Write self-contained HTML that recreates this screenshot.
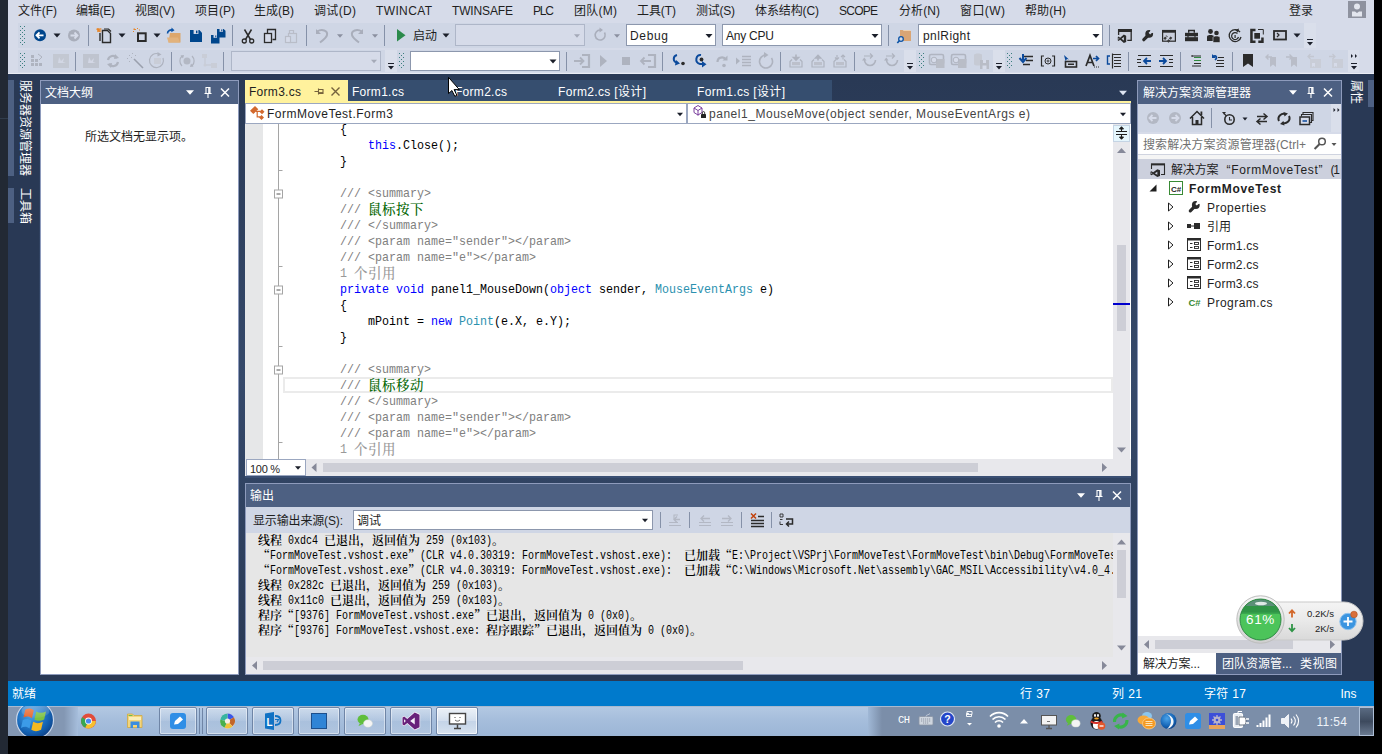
<!DOCTYPE html>
<html lang="zh-CN"><head><meta charset="utf-8"><title>FormMoveTest - Microsoft Visual Studio</title>
<style>
html,body{margin:0;padding:0;background:#000;}
#r{position:relative;width:1382px;height:754px;overflow:hidden;font-family:"Liberation Sans","Noto Sans CJK SC",sans-serif;font-size:12px;}
#r div,#r span.t{position:absolute;}
.t{white-space:pre;transform-origin:0 50%;}
.mo{font-family:"Liberation Mono","Noto Serif CJK SC",monospace;}
.cj{font-family:"Noto Serif CJK SC","Liberation Mono",serif;}
.vt{writing-mode:vertical-rl;text-orientation:sideways;font-size:12px;line-height:14px;width:14px;color:#fff;letter-spacing:0px;transform:translateX(-100%);white-space:nowrap;}
svg{position:absolute;left:0;top:0;}
</style></head><body><div id="r">
<div style="left:0px;top:0px;width:1382px;height:754px;background:#293955;"></div>
<div style="left:39px;top:80px;width:1303px;height:595px;background:linear-gradient(180deg,#293955 0%,#35496a 50%,#293955 100%);"></div>
<div style="left:0px;top:0px;width:8px;height:754px;background:#222934;"></div>
<div style="left:0px;top:118px;width:8px;height:1px;background:#313d4c;"></div>
<div style="left:1374px;top:0px;width:8px;height:754px;background:#000;"></div>
<div style="left:8px;top:0px;width:1366px;height:74px;background:#d6dbe9;"></div>
<div style="left:8px;top:73px;width:1366px;height:1px;background:#e9ecf4;"></div>
<span class="t" style="left:18px;top:2.5px;height:16px;line-height:16px;font-size:12px;color:#1e1e1e;letter-spacing:-0.082px;">文件(F)</span>
<span class="t" style="left:76px;top:2.5px;height:16px;line-height:16px;font-size:12px;color:#1e1e1e;letter-spacing:-0.250px;">编辑(E)</span>
<span class="t" style="left:135px;top:2.5px;height:16px;line-height:16px;font-size:12px;color:#1e1e1e;letter-spacing:0.000px;">视图(V)</span>
<span class="t" style="left:195px;top:2.5px;height:16px;line-height:16px;font-size:12px;color:#1e1e1e;letter-spacing:0.000px;">项目(P)</span>
<span class="t" style="left:254px;top:2.5px;height:16px;line-height:16px;font-size:12px;color:#1e1e1e;letter-spacing:0.000px;">生成(B)</span>
<span class="t" style="left:314px;top:2.5px;height:16px;line-height:16px;font-size:12px;color:#1e1e1e;letter-spacing:0.332px;">调试(D)</span>
<span class="t" style="left:376px;top:2.5px;height:16px;line-height:16px;font-size:12px;color:#1e1e1e;letter-spacing:0.372px;">TWINCAT</span>
<span class="t" style="left:452px;top:2.5px;height:16px;line-height:16px;font-size:12px;color:#1e1e1e;letter-spacing:-0.143px;">TWINSAFE</span>
<span class="t" style="left:533px;top:2.5px;height:16px;line-height:16px;font-size:12px;color:#1e1e1e;letter-spacing:-1.172px;">PLC</span>
<span class="t" style="left:574px;top:2.5px;height:16px;line-height:16px;font-size:12px;color:#1e1e1e;letter-spacing:0.250px;">团队(M)</span>
<span class="t" style="left:637px;top:2.5px;height:16px;line-height:16px;font-size:12px;color:#1e1e1e;letter-spacing:-0.082px;">工具(T)</span>
<span class="t" style="left:696px;top:2.5px;height:16px;line-height:16px;font-size:12px;color:#1e1e1e;letter-spacing:-0.250px;">测试(S)</span>
<span class="t" style="left:755px;top:2.5px;height:16px;line-height:16px;font-size:12px;color:#1e1e1e;letter-spacing:-0.112px;">体系结构(C)</span>
<span class="t" style="left:839px;top:2.5px;height:16px;line-height:16px;font-size:12px;color:#1e1e1e;letter-spacing:-0.754px;">SCOPE</span>
<span class="t" style="left:899px;top:2.5px;height:16px;line-height:16px;font-size:12px;color:#1e1e1e;letter-spacing:0.082px;">分析(N)</span>
<span class="t" style="left:960px;top:2.5px;height:16px;line-height:16px;font-size:12px;color:#1e1e1e;letter-spacing:0.418px;">窗口(W)</span>
<span class="t" style="left:1025px;top:2.5px;height:16px;line-height:16px;font-size:12px;color:#1e1e1e;letter-spacing:0.082px;">帮助(H)</span>
<span class="t" style="left:1289px;top:2.5px;height:16px;line-height:16px;font-size:12px;color:#1e1e1e;letter-spacing:-0.016px;">登录</span>
<div style="left:1348px;top:1px;width:18px;height:17px;background:#8e929f;"></div>
<div style="left:18px;top:23px;width:1286px;height:25px;background:#cfd6e5;"></div>
<div style="left:1304px;top:23px;width:12px;height:25px;background:#dadfeb;"></div>
<div style="left:18px;top:50px;width:367px;height:22px;background:#cfd6e5;"></div>
<div style="left:397px;top:50px;width:507px;height:22px;background:#cfd6e5;"></div>
<div style="left:916px;top:50px;width:77px;height:22px;background:#cfd6e5;"></div>
<div style="left:1005px;top:50px;width:343px;height:22px;background:#cfd6e5;"></div>
<div style="left:385px;top:50px;width:12px;height:22px;background:#dadfeb;"></div>
<div style="left:904px;top:50px;width:12px;height:22px;background:#dadfeb;"></div>
<div style="left:993px;top:50px;width:12px;height:22px;background:#dadfeb;"></div>
<div style="left:1348px;top:50px;width:11px;height:22px;background:#dadfeb;"></div>
<div style="left:455px;top:24px;width:130px;height:22px;background:#d6dbe9;box-sizing:border-box;border:1px solid #aeb6c8;"></div>
<div style="left:626px;top:24px;width:90px;height:22px;background:#fff;box-sizing:border-box;border:1px solid #8c97ad;"></div>
<div style="left:722px;top:24px;width:160px;height:22px;background:#fff;box-sizing:border-box;border:1px solid #8c97ad;"></div>
<div style="left:918px;top:24px;width:185px;height:22px;background:#fff;box-sizing:border-box;border:1px solid #8c97ad;"></div>
<div style="left:231px;top:51px;width:150px;height:20px;background:#d6dbe9;box-sizing:border-box;border:1px solid #aeb6c8;"></div>
<div style="left:410px;top:51px;width:150px;height:20px;background:#fff;box-sizing:border-box;border:1px solid #8c97ad;"></div>
<span class="t" style="left:413px;top:28.0px;height:16px;line-height:16px;font-size:12px;color:#1e1e1e;letter-spacing:-0.016px;">启动</span>
<span class="t" style="left:630px;top:28.0px;height:16px;line-height:16px;font-size:12px;color:#1e1e1e;letter-spacing:0.656px;">Debug</span>
<span class="t" style="left:726px;top:28.0px;height:16px;line-height:16px;font-size:12px;color:#1e1e1e;letter-spacing:-0.227px;">Any CPU</span>
<span class="t" style="left:923px;top:28.0px;height:16px;line-height:16px;font-size:12px;color:#1e1e1e;letter-spacing:0.424px;">pnlRight</span>
<div style="left:8px;top:80px;width:6px;height:96px;background:#4d6082;"></div>
<div style="left:8px;top:188px;width:6px;height:35px;background:#4d6082;"></div>
<div class="vt" style="left:32px;top:80px;">服务器资源管理器</div>
<div class="vt" style="left:32px;top:188px;">工具箱</div>
<div class="vt" style="left:1363px;top:80px;">属性</div>
<div style="left:1368px;top:80px;width:6px;height:27px;background:#4d6082;"></div>
<div style="left:40px;top:80px;width:199px;height:595px;background:#fff;box-sizing:border-box;border:1px solid #8e9bbc;"></div>
<div style="left:41px;top:81px;width:197px;height:23px;background:#4d6082;"></div>
<span class="t" style="left:45px;top:85.0px;height:16px;line-height:16px;font-size:12px;color:#fff;letter-spacing:-0.005px;">文档大纲</span>
<span class="t" style="left:85px;top:129.0px;height:16px;line-height:16px;font-size:12px;color:#1e1e1e;">所选文档无显示项。</span>
<div style="left:348px;top:80px;width:484px;height:21px;background:#364e6f;"></div>
<div style="left:245px;top:80px;width:103px;height:23px;background:#fff29d;"></div>
<div style="left:245px;top:101px;width:886px;height:2px;background:#fff29d;"></div>
<span class="t" style="left:249px;top:84.0px;height:16px;line-height:16px;font-size:12px;color:#1e1e1e;letter-spacing:0.283px;">Form3.cs</span>
<span class="t" style="left:352px;top:84.0px;height:16px;line-height:16px;font-size:12px;color:#fff;letter-spacing:0.283px;">Form1.cs</span>
<span class="t" style="left:455px;top:84.0px;height:16px;line-height:16px;font-size:12px;color:#fff;letter-spacing:0.283px;">Form2.cs</span>
<span class="t" style="left:558px;top:84.0px;height:16px;line-height:16px;font-size:12px;color:#fff;letter-spacing:0.332px;">Form2.cs [设计]</span>
<span class="t" style="left:697px;top:84.0px;height:16px;line-height:16px;font-size:12px;color:#fff;letter-spacing:0.332px;">Form1.cs [设计]</span>
<div style="left:245px;top:103px;width:886px;height:374px;background:#fff;"></div>
<div style="left:245px;top:103px;width:886px;height:21px;background:#fff;box-sizing:border-box;border:1px solid #9ba7c0;"></div>
<div style="left:686px;top:103px;width:2px;height:21px;background:#9ba7c0;"></div>
<span class="t" style="left:267px;top:106.0px;height:16px;line-height:16px;font-size:12px;color:#1e1e1e;letter-spacing:0.508px;">FormMoveTest.Form3</span>
<span class="t" style="left:709px;top:106.0px;height:16px;line-height:16px;font-size:12px;color:#444;letter-spacing:0.531px;">panel1_MouseMove(object sender, MouseEventArgs e)</span>
<div style="left:245px;top:124px;width:18px;height:335px;background:#e6e7e8;"></div>
<div style="left:1113px;top:124px;width:17px;height:335px;background:#e8e8ec;"></div>
<div style="left:1113px;top:125px;width:17px;height:17px;background:#e5f6fd;box-sizing:border-box;border:1px solid #c5d4e4;"></div>
<div style="left:1117px;top:245px;width:9px;height:86px;background:#cdced6;"></div>
<div style="left:1113px;top:303px;width:17px;height:2px;background:#0000cd;"></div>
<div style="left:278px;top:124px;width:1px;height:335px;background:#a5a5a5;"></div>
<div style="left:283px;top:377px;width:830px;height:16px;background:#fff;box-sizing:border-box;border:2px solid #ebebeb;"></div>
<div style="left:245px;top:459px;width:886px;height:18px;background:#e8e8ec;"></div>
<div style="left:246px;top:459px;width:60px;height:17px;background:#fff;box-sizing:border-box;border:1px solid #9ba7c0;"></div>
<span class="t" style="left:250px;top:460.5px;height:16px;line-height:16px;font-size:11px;color:#1e1e1e;letter-spacing:-0.301px;">100 %</span>
<div style="left:323px;top:463px;width:655px;height:9px;background:#cdced6;"></div>
<div style="left:245px;top:476px;width:886px;height:2px;background:#3a4f73;"></div>
<div style="left:245px;top:483px;width:886px;height:192px;background:#e6e6e6;box-sizing:border-box;border:1px solid #8e9bbc;"></div>
<div style="left:246px;top:484px;width:884px;height:23px;background:#4d6082;"></div>
<span class="t" style="left:250px;top:488.0px;height:16px;line-height:16px;font-size:12px;color:#fff;letter-spacing:-0.016px;">输出</span>
<div style="left:246px;top:507px;width:884px;height:26px;background:#cfd6e5;"></div>
<span class="t" style="left:253px;top:512.5px;height:16px;line-height:16px;font-size:12px;color:#1e1e1e;letter-spacing:-0.149px;">显示输出来源(S):</span>
<div style="left:353px;top:510px;width:300px;height:20px;background:#fff;box-sizing:border-box;border:1px solid #8c97ad;"></div>
<span class="t" style="left:357px;top:512.5px;height:16px;line-height:16px;font-size:12px;color:#1e1e1e;letter-spacing:-0.016px;">调试</span>
<div style="left:1113px;top:533px;width:17px;height:124px;background:#e8e8ec;"></div>
<div style="left:1117px;top:550px;width:9px;height:48px;background:#cdced6;"></div>
<div style="left:246px;top:657px;width:884px;height:17px;background:#e8e8ec;"></div>
<div style="left:263px;top:661px;width:480px;height:9px;background:#cdced6;"></div>
<div style="left:1137px;top:80px;width:205px;height:595px;background:#fff;box-sizing:border-box;border:1px solid #8e9bbc;"></div>
<div style="left:1138px;top:81px;width:203px;height:23px;background:#4d6082;"></div>
<span class="t" style="left:1143px;top:85.0px;height:16px;line-height:16px;font-size:12px;color:#fff;letter-spacing:-0.002px;">解决方案资源管理器</span>
<div style="left:1138px;top:104px;width:203px;height:28px;background:#cfd6e5;"></div>
<div style="left:1331px;top:104px;width:10px;height:28px;background:#dadfeb;"></div>
<div style="left:1138px;top:132px;width:203px;height:2px;background:#d6dbe9;"></div>
<div style="left:1138px;top:134px;width:203px;height:21px;background:#fff;box-sizing:border-box;border-bottom:1px solid #d0d4e0;"></div>
<span class="t" style="left:1143px;top:137.0px;height:16px;line-height:16px;font-size:12px;color:#717171;letter-spacing:0.083px;">搜索解决方案资源管理器(Ctrl+</span>
<div style="left:1138px;top:155px;width:203px;height:4px;background:#f5f5f5;"></div>
<div style="left:1138px;top:159px;width:203px;height:20px;background:#ccd0dd;"></div>
<span class="t" style="left:1171px;top:161.5px;height:16px;line-height:16px;font-size:12px;color:#1e1e1e;letter-spacing:-0.172px;">解决方案</span>
<span class="t" style="left:1226.5px;top:161.5px;height:16px;line-height:16px;font-size:12px;color:#1e1e1e;letter-spacing:0.666px;">“FormMoveTest”</span>
<span class="t" style="left:1330.5px;top:161.5px;height:16px;line-height:16px;font-size:12px;color:#1e1e1e;letter-spacing:-1.172px;">(1</span>
<span class="t" style="left:1189px;top:180.5px;height:16px;line-height:16px;font-size:12px;color:#1e1e1e;font-weight:700;letter-spacing:0.685px;">FormMoveTest</span>
<span class="t" style="left:1207px;top:199.5px;height:16px;line-height:16px;font-size:12px;color:#1e1e1e;letter-spacing:0.477px;">Properties</span>
<span class="t" style="left:1207px;top:218.5px;height:16px;line-height:16px;font-size:12px;color:#1e1e1e;letter-spacing:-0.016px;">引用</span>
<span class="t" style="left:1207px;top:237.5px;height:16px;line-height:16px;font-size:12px;color:#1e1e1e;letter-spacing:0.212px;">Form1.cs</span>
<span class="t" style="left:1207px;top:256.5px;height:16px;line-height:16px;font-size:12px;color:#1e1e1e;letter-spacing:0.212px;">Form2.cs</span>
<span class="t" style="left:1207px;top:275.5px;height:16px;line-height:16px;font-size:12px;color:#1e1e1e;letter-spacing:0.212px;">Form3.cs</span>
<span class="t" style="left:1207px;top:294.5px;height:16px;line-height:16px;font-size:12px;color:#1e1e1e;letter-spacing:0.460px;">Program.cs</span>
<div style="left:1138px;top:636px;width:203px;height:17px;background:#e8e8ec;"></div>
<div style="left:1155px;top:640px;width:138px;height:9px;background:#cdced6;"></div>
<div style="left:1138px;top:653px;width:203px;height:21px;background:#4d6082;"></div>
<div style="left:1138px;top:653px;width:78px;height:21px;background:#fff;"></div>
<span class="t" style="left:1143px;top:656.0px;height:16px;line-height:16px;font-size:12px;color:#1e1e1e;letter-spacing:-0.169px;">解决方案...</span>
<span class="t" style="left:1222px;top:656.0px;height:16px;line-height:16px;font-size:12px;color:#fff;letter-spacing:-0.002px;">团队资源管...</span>
<span class="t" style="left:1300px;top:656.0px;height:16px;line-height:16px;font-size:12px;color:#fff;letter-spacing:0.492px;">类视图</span>
<div style="left:8px;top:681px;width:1366px;height:25px;background:#007acc;"></div>
<span class="t" style="left:12px;top:686.0px;height:16px;line-height:16px;font-size:12px;color:#fff;letter-spacing:-0.016px;">就绪</span>
<span class="t" style="left:1020px;top:686.0px;height:16px;line-height:16px;font-size:12px;color:#fff;letter-spacing:0.438px;">行 37</span>
<span class="t" style="left:1112px;top:686.0px;height:16px;line-height:16px;font-size:12px;color:#fff;letter-spacing:0.438px;">列 21</span>
<span class="t" style="left:1204px;top:686.0px;height:16px;line-height:16px;font-size:12px;color:#fff;letter-spacing:0.328px;">字符 17</span>
<span class="t" style="left:1340.5px;top:686.0px;height:16px;line-height:16px;font-size:12px;color:#fff;letter-spacing:-0.008px;">Ins</span>
<div style="left:8px;top:706px;width:1366px;height:30px;background:#a6bedc;"></div>
<div style="left:8px;top:706px;width:70px;height:30px;background:linear-gradient(90deg,#8397b3 0,#8397b3 80%,#a6bedc 100%);"></div>
<div style="left:78px;top:706px;width:800px;height:30px;background:linear-gradient(180deg,#b4c9e3 0,#a6bedc 45%,#9cb6d6 100%);"></div>
<div style="left:868px;top:706px;width:506px;height:30px;background:linear-gradient(90deg,#a0b8d6 0,#7b8ea9 14px,#7b8ea9 100%);"></div>
<div style="left:8px;top:706px;width:1366px;height:1px;background:#a9b9cf;"></div>
<div style="left:8px;top:736px;width:1374px;height:18px;background:#000;"></div>
<div style="left:159px;top:707px;width:38px;height:28px;background:linear-gradient(180deg,rgba(255,255,255,.35),rgba(255,255,255,.12) 50%,rgba(255,255,255,.05) 51%,rgba(255,255,255,.2));box-sizing:border-box;border:1px solid #6f85a6;border-radius:2px;box-shadow:inset 0 0 0 1px rgba(255,255,255,.45);"></div>
<div style="left:206px;top:707px;width:42px;height:28px;background:linear-gradient(180deg,rgba(255,255,255,.35),rgba(255,255,255,.12) 50%,rgba(255,255,255,.05) 51%,rgba(255,255,255,.2));box-sizing:border-box;border:1px solid #6f85a6;border-radius:2px;box-shadow:inset 0 0 0 1px rgba(255,255,255,.45);"></div>
<div style="left:252px;top:707px;width:42px;height:28px;background:linear-gradient(180deg,rgba(255,255,255,.35),rgba(255,255,255,.12) 50%,rgba(255,255,255,.05) 51%,rgba(255,255,255,.2));box-sizing:border-box;border:1px solid #6f85a6;border-radius:2px;box-shadow:inset 0 0 0 1px rgba(255,255,255,.45);"></div>
<div style="left:298px;top:707px;width:42px;height:28px;background:linear-gradient(180deg,rgba(255,255,255,.35),rgba(255,255,255,.12) 50%,rgba(255,255,255,.05) 51%,rgba(255,255,255,.2));box-sizing:border-box;border:1px solid #6f85a6;border-radius:2px;box-shadow:inset 0 0 0 1px rgba(255,255,255,.45);"></div>
<div style="left:344px;top:707px;width:42px;height:28px;background:linear-gradient(180deg,rgba(255,255,255,.35),rgba(255,255,255,.12) 50%,rgba(255,255,255,.05) 51%,rgba(255,255,255,.2));box-sizing:border-box;border:1px solid #6f85a6;border-radius:2px;box-shadow:inset 0 0 0 1px rgba(255,255,255,.45);"></div>
<div style="left:390px;top:707px;width:42px;height:28px;background:linear-gradient(180deg,rgba(255,255,255,.35),rgba(255,255,255,.12) 50%,rgba(255,255,255,.05) 51%,rgba(255,255,255,.2));box-sizing:border-box;border:1px solid #6f85a6;border-radius:2px;box-shadow:inset 0 0 0 1px rgba(255,255,255,.45);"></div>
<div style="left:436px;top:707px;width:42px;height:28px;background:linear-gradient(180deg,rgba(255,255,255,.75),rgba(255,255,255,.5) 50%,rgba(255,255,255,.35) 51%,rgba(255,255,255,.6));box-sizing:border-box;border:1px solid #6f85a6;border-radius:2px;box-shadow:inset 0 0 0 1px rgba(255,255,255,.7);"></div>
<div style="left:199px;top:708px;width:1px;height:26px;background:#6f85a6;"></div>
<div style="left:202px;top:708px;width:1px;height:26px;background:#6f85a6;"></div>
<span class="t" style="left:898px;top:711.5px;height:16px;line-height:16px;font-size:10.5px;color:#fff;font-family:'Liberation Mono','Noto Serif CJK SC',monospace;letter-spacing:-0.609px;">CH</span>
<span class="t" style="left:1316.5px;top:714.0px;height:16px;line-height:16px;font-size:12px;color:#eef3f9;letter-spacing:0.340px;">11:54</span>
<div style="left:1359px;top:707px;width:15px;height:29px;background:linear-gradient(180deg,#5a6b82,#3d4a5e 50%,#6a7a90);box-sizing:border-box;border:1px solid #aebfd6;"></div>
<div style="left:245px;top:124px;width:868px;height:335px;overflow:hidden;"><span class="t mo" style="left:39.0px;top:-2.0px;height:16px;line-height:16px;font-size:13px;transform:scaleX(0.8973);color:#000">        {</span><span class="t mo" style="left:123.0px;top:14.0px;height:16px;line-height:16px;font-size:13px;transform:scaleX(0.8973);color:#0000ff">this</span><span class="t mo" style="left:151.0px;top:14.0px;height:16px;line-height:16px;font-size:13px;transform:scaleX(0.8973);color:#000">.Close();</span><span class="t mo" style="left:39.0px;top:30.0px;height:16px;line-height:16px;font-size:13px;transform:scaleX(0.8973);color:#000">        }</span><span class="t mo" style="left:39.0px;top:62.0px;height:16px;line-height:16px;font-size:13px;transform:scaleX(0.8973);color:#808080">        /// &lt;summary&gt;</span><span class="t mo" style="left:39.0px;top:78.0px;height:16px;line-height:16px;font-size:13px;transform:scaleX(0.8973);color:#808080">        /// </span><span class="t cj" style="left:123.0px;top:75.5px;height:16px;line-height:16px;font-size:13.5px;letter-spacing:0.50px;color:#006400;font-weight:500">鼠标按下</span><span class="t mo" style="left:39.0px;top:94.0px;height:16px;line-height:16px;font-size:13px;transform:scaleX(0.8973);color:#808080">        /// &lt;/summary&gt;</span><span class="t mo" style="left:39.0px;top:110.0px;height:16px;line-height:16px;font-size:13px;transform:scaleX(0.8973);color:#808080">        /// &lt;param name="sender"&gt;&lt;/param&gt;</span><span class="t mo" style="left:39.0px;top:126.0px;height:16px;line-height:16px;font-size:13px;transform:scaleX(0.8973);color:#808080">        /// &lt;param name="e"&gt;&lt;/param&gt;</span><span class="t mo" style="left:39.0px;top:142.0px;height:16px;line-height:16px;font-size:13px;transform:scaleX(0.8973);color:#999">        1 </span><span class="t cj" style="left:109.0px;top:139.5px;height:16px;line-height:16px;font-size:13.5px;letter-spacing:0.50px;color:#999;font-weight:500">个引用</span><span class="t mo" style="left:95.0px;top:158.0px;height:16px;line-height:16px;font-size:13px;transform:scaleX(0.8973);color:#0000ff">private void</span><span class="t mo" style="left:179.0px;top:158.0px;height:16px;line-height:16px;font-size:13px;transform:scaleX(0.8973);color:#000"> panel1_MouseDown(</span><span class="t mo" style="left:305.0px;top:158.0px;height:16px;line-height:16px;font-size:13px;transform:scaleX(0.8973);color:#0000ff">object</span><span class="t mo" style="left:347.0px;top:158.0px;height:16px;line-height:16px;font-size:13px;transform:scaleX(0.8973);color:#000"> sender, </span><span class="t mo" style="left:410.0px;top:158.0px;height:16px;line-height:16px;font-size:13px;transform:scaleX(0.8973);color:#2b91af">MouseEventArgs</span><span class="t mo" style="left:508.0px;top:158.0px;height:16px;line-height:16px;font-size:13px;transform:scaleX(0.8973);color:#000"> e)</span><span class="t mo" style="left:39.0px;top:174.0px;height:16px;line-height:16px;font-size:13px;transform:scaleX(0.8973);color:#000">        {</span><span class="t mo" style="left:39.0px;top:190.0px;height:16px;line-height:16px;font-size:13px;transform:scaleX(0.8973);color:#000">            mPoint = </span><span class="t mo" style="left:186.0px;top:190.0px;height:16px;line-height:16px;font-size:13px;transform:scaleX(0.8973);color:#0000ff">new</span><span class="t mo" style="left:214.0px;top:190.0px;height:16px;line-height:16px;font-size:13px;transform:scaleX(0.8973);color:#2b91af">Point</span><span class="t mo" style="left:249.0px;top:190.0px;height:16px;line-height:16px;font-size:13px;transform:scaleX(0.8973);color:#000">(e.X, e.Y);</span><span class="t mo" style="left:39.0px;top:206.0px;height:16px;line-height:16px;font-size:13px;transform:scaleX(0.8973);color:#000">        }</span><span class="t mo" style="left:39.0px;top:238.0px;height:16px;line-height:16px;font-size:13px;transform:scaleX(0.8973);color:#808080">        /// &lt;summary&gt;</span><span class="t mo" style="left:39.0px;top:254.0px;height:16px;line-height:16px;font-size:13px;transform:scaleX(0.8973);color:#808080">        /// </span><span class="t cj" style="left:123.0px;top:251.5px;height:16px;line-height:16px;font-size:13.5px;letter-spacing:0.50px;color:#006400;font-weight:500">鼠标移动</span><span class="t mo" style="left:39.0px;top:270.0px;height:16px;line-height:16px;font-size:13px;transform:scaleX(0.8973);color:#808080">        /// &lt;/summary&gt;</span><span class="t mo" style="left:39.0px;top:286.0px;height:16px;line-height:16px;font-size:13px;transform:scaleX(0.8973);color:#808080">        /// &lt;param name="sender"&gt;&lt;/param&gt;</span><span class="t mo" style="left:39.0px;top:302.0px;height:16px;line-height:16px;font-size:13px;transform:scaleX(0.8973);color:#808080">        /// &lt;param name="e"&gt;&lt;/param&gt;</span><span class="t mo" style="left:39.0px;top:318.0px;height:16px;line-height:16px;font-size:13px;transform:scaleX(0.8973);color:#999">        1 </span><span class="t cj" style="left:109.0px;top:315.5px;height:16px;line-height:16px;font-size:13.5px;letter-spacing:0.50px;color:#999;font-weight:500">个引用</span><span class="t mo" style="left:95.0px;top:334.0px;height:16px;line-height:16px;font-size:13px;transform:scaleX(0.8973);color:#0000ff">private void</span><span class="t mo" style="left:179.0px;top:334.0px;height:16px;line-height:16px;font-size:13px;transform:scaleX(0.8973);color:#000"> panel1_MouseMove(</span><span class="t mo" style="left:305.0px;top:334.0px;height:16px;line-height:16px;font-size:13px;transform:scaleX(0.8973);color:#0000ff">object</span><span class="t mo" style="left:347.0px;top:334.0px;height:16px;line-height:16px;font-size:13px;transform:scaleX(0.8973);color:#000"> sender, </span><span class="t mo" style="left:410.0px;top:334.0px;height:16px;line-height:16px;font-size:13px;transform:scaleX(0.8973);color:#2b91af">MouseEventArgs</span><span class="t mo" style="left:508.0px;top:334.0px;height:16px;line-height:16px;font-size:13px;transform:scaleX(0.8973);color:#000"> e)</span></div>
<div style="left:246px;top:533px;width:867px;height:124px;overflow:hidden;"><span class="t cj" style="left:12.0px;top:-1.5px;height:15px;line-height:15px;font-size:12px;letter-spacing:0.00px;color:#000;font-weight:600">线程</span><span class="t mo" style="left:36.0px;top:0.5px;height:15px;line-height:15px;font-size:12px;transform:scaleX(0.8332);color:#000"> 0xdc4 </span><span class="t cj" style="left:78.0px;top:-1.5px;height:15px;line-height:15px;font-size:12px;letter-spacing:0.00px;color:#000;font-weight:600">已退出，返回值为</span><span class="t mo" style="left:174.0px;top:0.5px;height:15px;line-height:15px;font-size:12px;transform:scaleX(0.8332);color:#000"> 259 (0x103)</span><span class="t cj" style="left:246.0px;top:-1.5px;height:15px;line-height:15px;font-size:12px;letter-spacing:0.00px;color:#000;font-weight:600">。</span><span class="t cj" style="left:12.0px;top:13.5px;height:15px;line-height:15px;font-size:12px;letter-spacing:0.00px;color:#000;font-weight:600">“</span><span class="t mo" style="left:24.0px;top:15.5px;height:15px;line-height:15px;font-size:12px;transform:scaleX(0.8332);color:#000">FormMoveTest.vshost.exe</span><span class="t cj" style="left:162.0px;top:13.5px;height:15px;line-height:15px;font-size:12px;letter-spacing:0.00px;color:#000;font-weight:600">”</span><span class="t mo" style="left:174.0px;top:15.5px;height:15px;line-height:15px;font-size:12px;transform:scaleX(0.8332);color:#000">(CLR v4.0.30319: FormMoveTest.vshost.exe):  </span><span class="t cj" style="left:438.0px;top:13.5px;height:15px;line-height:15px;font-size:12px;letter-spacing:0.00px;color:#000;font-weight:600">已加载“</span><span class="t mo" style="left:486.0px;top:15.5px;height:15px;line-height:15px;font-size:12px;transform:scaleX(0.8332);color:#000">E:\Project\VSPrj\FormMoveTest\FormMoveTest\bin\Debug\FormMoveTest.vshost.exe</span><span class="t cj" style="left:942.0px;top:13.5px;height:15px;line-height:15px;font-size:12px;letter-spacing:0.00px;color:#000;font-weight:600">”。已加载符号。</span><span class="t cj" style="left:12.0px;top:28.5px;height:15px;line-height:15px;font-size:12px;letter-spacing:0.00px;color:#000;font-weight:600">“</span><span class="t mo" style="left:24.0px;top:30.5px;height:15px;line-height:15px;font-size:12px;transform:scaleX(0.8332);color:#000">FormMoveTest.vshost.exe</span><span class="t cj" style="left:162.0px;top:28.5px;height:15px;line-height:15px;font-size:12px;letter-spacing:0.00px;color:#000;font-weight:600">”</span><span class="t mo" style="left:174.0px;top:30.5px;height:15px;line-height:15px;font-size:12px;transform:scaleX(0.8332);color:#000">(CLR v4.0.30319: FormMoveTest.vshost.exe):  </span><span class="t cj" style="left:438.0px;top:28.5px;height:15px;line-height:15px;font-size:12px;letter-spacing:0.00px;color:#000;font-weight:600">已加载“</span><span class="t mo" style="left:486.0px;top:30.5px;height:15px;line-height:15px;font-size:12px;transform:scaleX(0.8332);color:#000">C:\Windows\Microsoft.Net\assembly\GAC_MSIL\Accessibility\v4.0_4.0.0.0__b03f5f7f11d50a3a\Accessibility.dll</span><span class="t cj" style="left:1116.0px;top:28.5px;height:15px;line-height:15px;font-size:12px;letter-spacing:0.00px;color:#000;font-weight:600">”。</span><span class="t cj" style="left:12.0px;top:43.5px;height:15px;line-height:15px;font-size:12px;letter-spacing:0.00px;color:#000;font-weight:600">线程</span><span class="t mo" style="left:36.0px;top:45.5px;height:15px;line-height:15px;font-size:12px;transform:scaleX(0.8332);color:#000"> 0x282c </span><span class="t cj" style="left:84.0px;top:43.5px;height:15px;line-height:15px;font-size:12px;letter-spacing:0.00px;color:#000;font-weight:600">已退出，返回值为</span><span class="t mo" style="left:180.0px;top:45.5px;height:15px;line-height:15px;font-size:12px;transform:scaleX(0.8332);color:#000"> 259 (0x103)</span><span class="t cj" style="left:252.0px;top:43.5px;height:15px;line-height:15px;font-size:12px;letter-spacing:0.00px;color:#000;font-weight:600">。</span><span class="t cj" style="left:12.0px;top:58.5px;height:15px;line-height:15px;font-size:12px;letter-spacing:0.00px;color:#000;font-weight:600">线程</span><span class="t mo" style="left:36.0px;top:60.5px;height:15px;line-height:15px;font-size:12px;transform:scaleX(0.8332);color:#000"> 0x11c0 </span><span class="t cj" style="left:84.0px;top:58.5px;height:15px;line-height:15px;font-size:12px;letter-spacing:0.00px;color:#000;font-weight:600">已退出，返回值为</span><span class="t mo" style="left:180.0px;top:60.5px;height:15px;line-height:15px;font-size:12px;transform:scaleX(0.8332);color:#000"> 259 (0x103)</span><span class="t cj" style="left:252.0px;top:58.5px;height:15px;line-height:15px;font-size:12px;letter-spacing:0.00px;color:#000;font-weight:600">。</span><span class="t cj" style="left:12.0px;top:73.5px;height:15px;line-height:15px;font-size:12px;letter-spacing:0.00px;color:#000;font-weight:600">程序“</span><span class="t mo" style="left:48.0px;top:75.5px;height:15px;line-height:15px;font-size:12px;transform:scaleX(0.8332);color:#000">[9376] FormMoveTest.vshost.exe</span><span class="t cj" style="left:228.0px;top:73.5px;height:15px;line-height:15px;font-size:12px;letter-spacing:0.00px;color:#000;font-weight:600">”已退出，返回值为</span><span class="t mo" style="left:336.0px;top:75.5px;height:15px;line-height:15px;font-size:12px;transform:scaleX(0.8332);color:#000"> 0 (0x0)</span><span class="t cj" style="left:384.0px;top:73.5px;height:15px;line-height:15px;font-size:12px;letter-spacing:0.00px;color:#000;font-weight:600">。</span><span class="t cj" style="left:12.0px;top:88.5px;height:15px;line-height:15px;font-size:12px;letter-spacing:0.00px;color:#000;font-weight:600">程序“</span><span class="t mo" style="left:48.0px;top:90.5px;height:15px;line-height:15px;font-size:12px;transform:scaleX(0.8332);color:#000">[9376] FormMoveTest.vshost.exe: </span><span class="t cj" style="left:240.0px;top:88.5px;height:15px;line-height:15px;font-size:12px;letter-spacing:0.00px;color:#000;font-weight:600">程序跟踪”已退出，返回值为</span><span class="t mo" style="left:396.0px;top:90.5px;height:15px;line-height:15px;font-size:12px;transform:scaleX(0.8332);color:#000"> 0 (0x0)</span><span class="t cj" style="left:444.0px;top:88.5px;height:15px;line-height:15px;font-size:12px;letter-spacing:0.00px;color:#000;font-weight:600">。</span></div>
<svg width="1382" height="754" viewBox="0 0 1382 754">
<path d="M20 26h1v1h-1zM24 26h1v1h-1zM22 28h1v1h-1zM20 30h1v1h-1zM24 30h1v1h-1zM22 32h1v1h-1zM20 34h1v1h-1zM24 34h1v1h-1zM22 36h1v1h-1zM20 38h1v1h-1zM24 38h1v1h-1zM22 40h1v1h-1zM20 42h1v1h-1zM24 42h1v1h-1zM22 44h1v1h-1z" fill="#3c7f7f"/>
<circle cx="40" cy="35.3" r="6" fill="#00468c"/>
<path d="M43.5 35.3H37 M39.5 32.3L36.5 35.3L39.5 38.3" stroke="#fff" stroke-width="1.8" fill="none"/>
<path d="M53.5 33.5h7l-3.5 4.0z" fill="#1b1f2a"/>
<circle cx="74" cy="35.5" r="6" fill="#a9aebb"/>
<path d="M70.5 35.5H77 M74.5 32.5L77.5 35.5L74.5 38.5" stroke="#d6dbe9" stroke-width="1.8" fill="none"/>
<rect x="88.0" y="25" width="1" height="21" fill="#8591a8"/>
<path d="M102.5 30.5h5l3 3v9h-8z M100 33v8" fill="none" stroke="#2b2b2b" stroke-width="1.4"/>
<path d="M104 29h4.5l2.5 2.5" fill="none" stroke="#2b2b2b" stroke-width="1.2"/>
<path d="M98 28l1.5 1.5l1.5-1.5l-1.5 3l1.5 1.5l-3-1l-1 1l.5-2l-1.5-1.5z" fill="#e8862a"/>
<rect x="97.5" y="28" width="4" height="4" fill="#e8862a" opacity=".55"/>
<path d="M118.5 33.5h7l-3.5 4.0z" fill="#1b1f2a"/>
<rect x="138" y="33.300" width="7.700" height="7.700" fill="none" stroke="#2b2b2b" stroke-width="2"/>
<path d="M133 31h1v1h-1z M135 29h1v1h-1z M137 28h1v1h-1z M133.5 28.5h1.5v1.5h-1.5z M139 29.5h1v1h-1z" fill="#e8862a"/>
<path d="M153.5 33.5h7l-3.5 4.0z" fill="#1b1f2a"/>
<path d="M170 33h10.5v9.5h-12z" fill="#dca66b"/><path d="M167 37.5h11l2 5h-11.5z" fill="#e2b27c"/>
<path d="M167.5 33.5c0-3 3-4 5-3.5" fill="none" stroke="#0b53a6" stroke-width="1.6"/><path d="M171.5 27.5l3 2.7l-3.2 2z" fill="#0b53a6"/>
<path d="M190 30h9.36l2.64 2.64v9.36h-12z" fill="#00468c"/>
<rect x="193.6" y="30" width="4.800000000000001" height="3.96" fill="#d6dbe9"/>
<rect x="196.0" y="30.6" width="1.44" height="2.64" fill="#00468c"/>
<path d="M217 29h6.63l1.87 1.87v6.63h-8.5z" fill="#00468c"/>
<rect x="219.55" y="29" width="3.4000000000000004" height="2.805" fill="#d6dbe9"/>
<rect x="221.25" y="29.425" width="1.02" height="1.87" fill="#00468c"/>
<path d="M211 35h6.63l1.87 1.87v6.63h-8.5z" fill="#00468c"/>
<rect x="213.55" y="35" width="3.4000000000000004" height="2.805" fill="#d6dbe9"/>
<rect x="215.25" y="35.425" width="1.02" height="1.87" fill="#00468c"/>
<rect x="232.0" y="25" width="1" height="21" fill="#8591a8"/>
<path d="M244.5 29.5l6 10 M251.5 29.5l-6 10" stroke="#2b2b2b" stroke-width="1.5" fill="none"/><circle cx="244.3" cy="41" r="2" fill="none" stroke="#2b2b2b" stroke-width="1.3"/><circle cx="251.7" cy="41" r="2" fill="none" stroke="#2b2b2b" stroke-width="1.3"/>
<path d="M267.5 33.5v-4h8v10h-3" fill="none" stroke="#2b2b2b" stroke-width="1.3"/><rect x="264.5" y="33.5" width="7" height="9" fill="#d6dbe9" stroke="#2b2b2b" stroke-width="1.3"/>
<path d="M289.5 33v-2.5h4v2.5" fill="none" stroke="#b9bdc8" stroke-width="1.2"/><rect x="288.5" y="33.5" width="8" height="9" fill="none" stroke="#b9bdc8" stroke-width="1.2"/><rect x="285.5" y="36.5" width="5" height="6" fill="#d6dbe9" stroke="#b9bdc8" stroke-width="1.2"/>
<rect x="306.0" y="25" width="1" height="21" fill="#8591a8"/>
<path d="M317 31.5c5-3 11-1 10 3.5c-.5 2.5-3 4.500-7 7.500" fill="none" stroke="#a9aebb" stroke-width="2"/><path d="M316 29v5h5z" fill="#a9aebb"/>
<path d="M337.0 34.25h6l-3.0 3.5z" fill="#8b90a0"/>
<path d="M362 31.500c-5-3-11-1-10 3.5c.5 2.500 3 4.500 7 7.500" fill="none" stroke="#a9aebb" stroke-width="2"/><path d="M363 29v5h-5z" fill="#a9aebb"/>
<path d="M372.0 34.25h6l-3.0 3.5z" fill="#8b90a0"/>
<rect x="384.0" y="25" width="1" height="21" fill="#8591a8"/>
<path d="M397 29v12.500l8.500-6.250z" fill="#2b8a4b"/>
<path d="M442.5 33.5h7l-3.5 4.0z" fill="#1b1f2a"/>
<path d="M574.0 34.25h6l-3.0 3.5z" fill="#a5aab8"/>
<path d="M604.500 32.500a5 5 0 1 1-4.500-2.500" fill="none" stroke="#a9aebb" stroke-width="1.600"/><path d="M599.500 27.500l3.500 2.500l-3.500 2.500z" fill="#a9aebb"/>
<path d="M614.0 34.25h6l-3.0 3.5z" fill="#8b90a0"/>
<path d="M705.5 34.0h7l-3.5 4.0z" fill="#1b1f2a"/>
<path d="M871.5 34.0h7l-3.5 4.0z" fill="#1b1f2a"/>
<path d="M1092.5 34.0h7l-3.5 4.0z" fill="#1b1f2a"/>
<rect x="888.0" y="25" width="1" height="21" fill="#8591a8"/>
<path d="M900 30h3l1 1h7v10h-11z" fill="#d9a575"/><path d="M903.500 30.500h7" stroke="#f0d2b0" stroke-width="1"/><circle cx="901" cy="39" r="2.300" fill="#d6dbe9" stroke="#0b53a6" stroke-width="1.300"/><path d="M899.300 40.700l-2 2.300" stroke="#0b53a6" stroke-width="1.600"/>
<rect x="1109.0" y="25" width="1" height="21" fill="#8591a8"/>
<rect x="1119" y="31" width="12" height="9" fill="#c9cedb"/><path d="M1118.600 35v-5h12.600v10.400h-4" fill="none" stroke="#2b2b2b" stroke-width="1.300"/><path d="M1118 30.500h13.900" stroke="#2b2b2b" stroke-width="3"/>
<path d="M1123.85 34.60L1126.20 35.69L1126.20 41.91L1123.85 43.00L1120.15 39.81L1118.64 40.98L1117.80 40.48L1117.80 37.12L1118.64 36.62L1120.15 37.79ZM1123.85 37.12L1123.85 40.48L1121.58 38.80Z M1118.56 37.96L1118.56 39.64L1119.48 38.80Z" fill="#cfd6e5" stroke="#cfd6e5" stroke-width="1.8" stroke-linejoin="round"/>
<path d="M1123.85 34.60L1126.20 35.69L1126.20 41.91L1123.85 43.00L1120.15 39.81L1118.64 40.98L1117.80 40.48L1117.80 37.12L1118.64 36.62L1120.15 37.79ZM1123.85 37.12L1123.85 40.48L1121.58 38.80Z M1118.56 37.96L1118.56 39.64L1119.48 38.80Z" fill="#2b2b2b" fill-rule="evenodd"/>
<path d="M1143.800 39.700l4.200-4.200" stroke="#2b2b2b" stroke-width="3.200" stroke-linecap="round"/><circle cx="1149.200" cy="33.800" r="3.900" fill="#2b2b2b"/><path d="M1149.600 33.400l1.200-5l4 4z" fill="#cfd6e5"/><path d="M1149.400 33.600l2.300-2.300" stroke="#cfd6e5" stroke-width="2.200"/>
<rect x="1163" y="32" width="12" height="9" fill="#c9cedb"/><rect x="1162.600" y="30.600" width="12.800" height="10.600" fill="none" stroke="#2b2b2b" stroke-width="1.200"/><path d="M1162 31.300h14" stroke="#2b2b2b" stroke-width="2.800"/><path d="M1164.300 39.300l2.700-3.300 M1167.800 42l3.600-5" stroke="#3a3a3a" stroke-width="2.300" stroke-dasharray="2.600 .9"/>
<rect x="1185" y="32.800" width="13" height="8.400" fill="#2b2b2b"/><path d="M1188.700 32.800v-2.300h5.600v2.300" fill="none" stroke="#2b2b2b" stroke-width="1.400"/><path d="M1185 36.700h13" stroke="#cfd6e5" stroke-width=".9"/><path d="M1188 36v1.800 M1195 36v1.800" stroke="#2b2b2b" stroke-width="1.200"/>
<circle cx="1210.500" cy="31.500" r="2.400" fill="#2b2b2b"/><path d="M1207 41v-4.500c0-2 7-2 7 0v4.500z" fill="#2b2b2b"/><circle cx="1216.500" cy="33" r="2.300" fill="#2b2b2b"/><path d="M1213 42.500v-5c0-2 7-2 7 0v5z" fill="#2b2b2b" stroke="#d6dbe9" stroke-width=".6"/>
<path d="M1240 32a6 6 0 1 0 1 5" fill="none" stroke="#2b2b2b" stroke-width="1.300"/><path d="M1237.500 33.500a3.500 3.500 0 1 0 1 3.500" fill="none" stroke="#2b2b2b" stroke-width="1.200"/><path d="M1235 30l4-1.500l-1 4z" fill="#2b2b2b"/><rect x="1234.500" y="35" width="1.200" height="3" fill="#2b2b2b"/>
<path d="M1250.200 28.800h5.300v2.500h-2.800v9.200h2.800v2.500h-5.300z" fill="#2b2b2b"/><rect x="1254.300" y="33" width="5.700" height="5.700" fill="#2b2b2b"/><path d="M1258 29.500h5.300v5" fill="none" stroke="#2b2b2b" stroke-width="1"/><path d="M1258.300 43h5.400v-5.500h-2.500v3h-2.900z" fill="#2b2b2b"/>
<rect x="1274" y="31" width="12" height="8.500" fill="#c9cedb" stroke="#2b2b2b" stroke-width="1.800"/><path d="M1277 33l2 2l-2 2" fill="none" stroke="#2b2b2b" stroke-width="1.200"/>
<path d="M1293.5 33.5h7l-3.5 4.0z" fill="#1b1f2a"/>
<path d="M1307 39h6v1h-6z M1307 42h6l-3 3.5z" fill="#1b1f2a"/>
<path d="M20 53h1v1h-1zM24 53h1v1h-1zM22 55h1v1h-1zM20 57h1v1h-1zM24 57h1v1h-1zM22 59h1v1h-1zM20 61h1v1h-1zM24 61h1v1h-1zM22 63h1v1h-1zM20 65h1v1h-1zM24 65h1v1h-1zM22 67h1v1h-1z" fill="#3c7f7f"/>
<path d="M31 63h3v3h-3z M35 63h3v3h-3z M39 63h3v3h-3z M31 59h3v3h-3z M35 59h3v3h-3z M31 55h3v3h-3z" fill="#aeb3bf"/><path d="M38 54l4 3l-3 3" fill="none" stroke="#aeb3bf" stroke-width="1"/>
<rect x="53" y="54" width="16" height="14" fill="#c3c8d2"/><path d="M59 57l2 4l3-3l-1 4l3 1h-8z" fill="#d6dbe9" opacity=".8"/>
<rect x="75.0" y="52" width="1" height="19" fill="#8591a8"/>
<rect x="83" y="54" width="16" height="14" fill="#bfc4cf"/><path d="M89 57l2 4l3-3l-1 4l3 1h-8z" fill="#d6dbe9" opacity=".85"/>
<path d="M108 60a5 5 0 0 1 9-2 M118 62a5 5 0 0 1-9 2" fill="none" stroke="#aeb3bf" stroke-width="2.200"/><path d="M115 54l4 4l-5 1z M111 68l-4-4l5-1z" fill="#aeb3bf"/>
<path d="M134 59l9 9" stroke="#9aa0ad" stroke-width="1.600"/><path d="M129 55h1v1h-1z M132 53h1v1h-1z M127 58h1v1h-1z M131 57h1v1h-1z M135 55h1v1h-1z M129 61h1v1h-1z" fill="#aeb3bf"/>
<path d="M163 58a7 7 0 1 1-4-4" fill="none" stroke="#aeb3bf" stroke-width="1.200"/><path d="M157.500 52l4 2.500l-4 2z" fill="#aeb3bf"/><rect x="154" y="58" width="7" height="6" fill="#c9cdd7"/>
<rect x="171.0" y="52" width="1" height="19" fill="#8591a8"/>
<circle cx="187" cy="61" r="3.500" fill="#b3b8c4"/><path d="M182 56a7 7 0 0 0 0 10 M192 56a7 7 0 0 1 0 10" fill="none" stroke="#aeb3bf" stroke-width="1.200"/><path d="M180.500 55.500l3.500-.5l-1 3.500z M193.500 66.500l-3.500.5l1-3.500z" fill="#aeb3bf"/>
<path d="M202 54h5v4h-5z M211 63h6v5h-6z" fill="#c9cdd7"/><path d="M205 58v7h6" fill="none" stroke="#c3c7d1" stroke-width="1"/><circle cx="205" cy="65" r="1.500" fill="#c9cdd7"/>
<rect x="223.0" y="52" width="1" height="19" fill="#8591a8"/>
<path d="M371.0 59.75h6l-3.0 3.5z" fill="#a5aab8"/>
<path d="M388 63h6v1h-6z M388 66h6l-3 3.5z" fill="#1b1f2a"/>
<path d="M399 53h1v1h-1zM403 53h1v1h-1zM401 55h1v1h-1zM399 57h1v1h-1zM403 57h1v1h-1zM401 59h1v1h-1zM399 61h1v1h-1zM403 61h1v1h-1zM401 63h1v1h-1zM399 65h1v1h-1zM403 65h1v1h-1zM401 67h1v1h-1z" fill="#3c7f7f"/>
<path d="M549.5 59.5h7l-3.5 4.0z" fill="#1b1f2a"/>
<rect x="566.0" y="52" width="1" height="19" fill="#8591a8"/>
<path d="M582 55h7v12h-7" fill="none" stroke="#aeb3bf" stroke-width="2.200"/><path d="M574 61h9 M580 57.500l3.500 3.500l-3.500 3.500" fill="none" stroke="#aeb3bf" stroke-width="1.800"/>
<path d="M600 55v12l7-6z" fill="#aeb3bf"/>
<rect x="622" y="57" width="8" height="8" fill="#aeb3bf"/>
<path d="M648 55h7v12h-7" fill="none" stroke="#aeb3bf" stroke-width="2.200"/><path d="M651 61h-10 M644.500 57.500l-3.500 3.500l3.500 3.500" fill="none" stroke="#aeb3bf" stroke-width="1.800"/>
<rect x="662.0" y="52" width="1" height="19" fill="#8591a8"/>
<path d="M677 55c-4 1-5 7 1 8" fill="none" stroke="#0b4a9c" stroke-width="2"/><path d="M676 60l4 3.500l-5 2z" fill="#0b4a9c"/><circle cx="683" cy="63.500" r="1.800" fill="#2b2b2b"/>
<path d="M701 55c-5-1-7 8-1 9h4" fill="none" stroke="#0b4a9c" stroke-width="2"/><path d="M702 61l4.500 3.200l-4.500 3.300z" fill="#0b4a9c"/><circle cx="701.500" cy="59.500" r="1.900" fill="#2b2b2b"/>
<path d="M717.500 62c0-5.500 6.500-5.500 8.500-2.500" fill="none" stroke="#aeb3bf" stroke-width="2.200"/><path d="M727.500 55.500v5h-5z" fill="#aeb3bf"/><circle cx="724" cy="65.500" r="1.800" fill="#aeb3bf"/>
<path d="M736 57.500v7l4-3.500z" fill="#aeb3bf"/><path d="M742 56.500h9 M742 59.500h9 M742 62.500h9 M742 65.500h9" stroke="#aeb3bf" stroke-width="1.500"/>
<path d="M771.500 58a6.500 6.500 0 1 1-5.500-3" fill="none" stroke="#aeb3bf" stroke-width="1.600"/><path d="M764 52l4.500 3l-4.500 3z" fill="#aeb3bf"/>
<rect x="780.0" y="52" width="1" height="19" fill="#8591a8"/>
<path d="M792 59.500l-2 2v5.500h12v-5.500l-2-2" fill="none" stroke="#aeb3bf" stroke-width="1.200"/><rect x="792" y="62" width="8" height="3.200" fill="#bcc0cb"/>
<path d="M796 54.500v4 M793.5 57.500l2.500 2.500l2.500-2.500z" fill="#aeb3bf" stroke="#aeb3bf" stroke-width="1.600"/>
<path d="M814 59.500l-2 2v5.500h12v-5.500l-2-2" fill="none" stroke="#aeb3bf" stroke-width="1.200"/><rect x="814" y="62" width="8" height="3.200" fill="#bcc0cb"/>
<path d="M818 60.500v-4 M815.5 58l2.500-2.500l2.500 2.500z" fill="#aeb3bf" stroke="#aeb3bf" stroke-width="1.600"/>
<path d="M836 59.500l-2 2v5.500h12v-5.500l-2-2" fill="none" stroke="#aeb3bf" stroke-width="1.200"/><rect x="836" y="62" width="8" height="3.200" fill="#bcc0cb"/>
<path d="M837 55v4 M835 57.500l2 2l2-2 M843 59.500v-4 M841 57l2-2l2 2" fill="none" stroke="#aeb3bf" stroke-width="1.100"/>
<rect x="854.0" y="52" width="1" height="19" fill="#8591a8"/>
<path d="M875.5 60a5.500 5.500 0 1 1-11 0" fill="none" stroke="#aeb3bf" stroke-width="1.600"/><path d="M864 56h8 M870 53.500l2.500 2.500l-2.500 2.500" fill="none" stroke="#aeb3bf" stroke-width="1.200"/><path d="M862 60.500h4.500l-2.200 -3z" fill="#aeb3bf"/>
<path d="M897.5 60a5.500 5.500 0 1 1-11 0" fill="none" stroke="#aeb3bf" stroke-width="1.600"/><path d="M886 56h8 M892 53.500l2.500 2.500l-2.500 2.500" fill="none" stroke="#aeb3bf" stroke-width="1.200"/><path d="M884 60.500h4.500l-2.200 -3z" fill="#aeb3bf"/>
<path d="M907 63h6v1h-6z M907 66h6l-3 3.5z" fill="#1b1f2a"/>
<path d="M919 53h1v1h-1zM923 53h1v1h-1zM921 55h1v1h-1zM919 57h1v1h-1zM923 57h1v1h-1zM921 59h1v1h-1zM919 61h1v1h-1zM923 61h1v1h-1zM921 63h1v1h-1zM919 65h1v1h-1zM923 65h1v1h-1zM921 67h1v1h-1z" fill="#3c7f7f"/>
<rect x="929.5" y="54.500" width="14" height="10" rx="1.500" fill="none" stroke="#b0b5c1" stroke-width="1.600"/><path d="M936 59h8.500v9h-8.500z" fill="#b9bdc7"/><circle cx="934" cy="60" r="2.800" fill="#d6dbe9" stroke="#b0b5c1" stroke-width="1"/>
<rect x="951.5" y="54.500" width="14" height="10" rx="1.500" fill="none" stroke="#b0b5c1" stroke-width="1.600"/><path d="M958 59h8.500v9h-8.500z" fill="#b9bdc7"/><circle cx="956" cy="60" r="2.800" fill="#d6dbe9" stroke="#b0b5c1" stroke-width="1"/>
<path d="M974 55c0-2 8-2 8 0v9c0 2-8 2-8 0z" fill="#c6cad4"/><path d="M980 60h9v9h-9z" fill="#b9bdc7"/><path d="M983 60h3v3h-3z M982.500 65.500h4v3.500h-4z" fill="#d6dbe9"/>
<path d="M996 63h6v1h-6z M996 66h6l-3 3.5z" fill="#1b1f2a"/>
<path d="M1007 53h1v1h-1zM1011 53h1v1h-1zM1009 55h1v1h-1zM1007 57h1v1h-1zM1011 57h1v1h-1zM1009 59h1v1h-1zM1007 61h1v1h-1zM1011 61h1v1h-1zM1009 63h1v1h-1zM1007 65h1v1h-1zM1011 65h1v1h-1zM1009 67h1v1h-1z" fill="#3c7f7f"/>
<path d="M1024 56.500h9 M1026 60.500h7 M1023 64.500h7" stroke="#2b2b2b" stroke-width="1.600"/><path d="M1023 54v6 M1019.500 58l3.500 4l3.500-4" fill="none" stroke="#0b4a9c" stroke-width="2"/>
<path d="M1044 56h-2.500v10h2.500 M1052 56h2.500v10h-2.500" fill="none" stroke="#2b2b2b" stroke-width="1.200"/><circle cx="1048" cy="61" r="3" fill="none" stroke="#2b2b2b" stroke-width="1"/><circle cx="1048" cy="61" r="1" fill="none" stroke="#2b2b2b" stroke-width=".8"/>
<rect x="1065.500" y="61.500" width="11" height="5.500" fill="none" stroke="#2b2b2b" stroke-width="1.600"/><rect x="1068" y="63.500" width="6" height="1.500" fill="#2b2b2b"/><path d="M1064 55l1.500 6l1.500-2l2 .5z" fill="#0b4a9c"/>
<path d="M1086 66l4-10.500l4 10.500 M1087.500 62.500h5" fill="none" stroke="#2b2b2b" stroke-width="1.700"/><path d="M1093 58.500h5 M1096 56l2.500 2.500l-2.500 2.500" fill="none" stroke="#0b4a9c" stroke-width="1.700"/><path d="M1094 66.500h1v1h-1z M1096 66.500h1v1h-1z M1098 66.500h1v1h-1z" fill="#2b2b2b"/>
<path d="M1110 56h-2.500v8h2.500" fill="none" stroke="#0b4a9c" stroke-width="1.400"/><path d="M1112.500 53.500v15" stroke="#2b2b2b" stroke-width="1.200"/><path d="M1112 54.500h9 M1114 57.500h7 M1114 60.500h7 M1114 63.500h7 M1114 66.500h7" stroke="#2b2b2b" stroke-width="1.100"/>
<rect x="1128.0" y="52" width="1" height="19" fill="#8591a8"/>
<path d="M1138 55.500h13 M1138 66.500h13 M1137 59.500h4 M1137 62.500h4" stroke="#2b2b2b" stroke-width="1.100"/><path d="M1151 61h-7 M1147 58l-3 3l3 3" fill="none" stroke="#0b4a9c" stroke-width="1.800"/>
<path d="M1160 55.500h13 M1160 66.500h13 M1169 59.500h4 M1169 62.500h4" stroke="#2b2b2b" stroke-width="1.100"/><path d="M1159 61h7 M1163 58l3 3l-3 3" fill="none" stroke="#0b4a9c" stroke-width="1.800"/>
<rect x="1180.0" y="52" width="1" height="19" fill="#8591a8"/>
<path d="M1191 56h2" stroke="#2b2b2b" stroke-width="1"/><path d="M1194 57.500h7 M1194 60.500h7" stroke="#2e8b3d" stroke-width="1.200"/><path d="M1192 56h9 M1194 63.500h7 M1192 66h9" stroke="#2b2b2b" stroke-width="1"/>
<path d="M1213 56.500c3-2 5 1 2 3.500" fill="none" stroke="#0b4a9c" stroke-width="1.600"/><path d="M1212 54v4h4z" fill="#0b4a9c"/><path d="M1218 57.500h6 M1217 60.500h7 M1216 63.500h8 M1216 66.500h8" stroke="#2b2b2b" stroke-width="1.100"/>
<rect x="1232.0" y="52" width="1" height="19" fill="#8591a8"/>
<path d="M1243 54h10v13l-5-3.500l-5 3.500z" fill="#2b2b2b"/>
<path d="M1270 57h6v10l-3-2.500l-3 2.500z" fill="#b9bdc8"/>
<path d="M1272 57h-6 M1268.5 54.500l-2.500 2.500l2.500 2.500" fill="none" stroke="#b9bdc8" stroke-width="1.400"/>
<path d="M1291 57h6v10l-3-2.500l-3 2.500z" fill="#b9bdc8"/>
<path d="M1286 57h6 M1289.5 54.500l2.500 2.500l-2.500 2.500" fill="none" stroke="#b9bdc8" stroke-width="1.400"/>
<rect x="1310" y="59" width="11" height="9" fill="#c9cdd7"/><path d="M1312 63h3v4l-1.500-1l-1.500 1z" fill="#d6dbe9"/>
<path d="M1314 56.500h-6 M1310.5 54l-2.500 2.500l2.500 2.500" fill="none" stroke="#c3c7d1" stroke-width="1.300"/>
<rect x="1332" y="59" width="11" height="9" fill="#c9cdd7"/><path d="M1334 63h3v4l-1.500-1l-1.500 1z" fill="#d6dbe9"/>
<path d="M1329 56.500h6 M1332.5 54l2.500 2.500l-2.500 2.500" fill="none" stroke="#c3c7d1" stroke-width="1.300"/>
<path d="M1351 63h6v1h-6z M1351 66h6l-3 3.5z" fill="#1b1f2a"/>
<path d="M1351 54l2 2l-2 2z M1355 54l2 2l-2 2z" fill="#1b1f2a"/>
<circle cx="1357" cy="6.500" r="3" fill="#e3e6ee"/><path d="M1352 16.500v-5h3l2 1.500l2-1.500h3v5z" fill="#e3e6ee"/>
<path d="M186.0 90.25h8l-4.0 4.5z" fill="#fff"/>
<path d="M206 87.5h4v6h-4z M204.5 93.5h7 M208 93.5v4.500" fill="none" stroke="#fff" stroke-width="1.100"/><path d="M209 87.5v6" stroke="#fff" stroke-width="1.600"/>
<path d="M221 88.5l8 8 M229 88.5l-8 8" stroke="#fff" stroke-width="1.500"/>
<path d="M1289.0 90.25h8l-4.0 4.5z" fill="#fff"/>
<path d="M1309 87.5h4v6h-4z M1307.5 93.5h7 M1311 93.5v4.500" fill="none" stroke="#fff" stroke-width="1.100"/><path d="M1312 87.5v6" stroke="#fff" stroke-width="1.600"/>
<path d="M1324 88.5l8 8 M1332 88.5l-8 8" stroke="#fff" stroke-width="1.500"/>
<path d="M1077.0 493.25h8l-4.0 4.5z" fill="#fff"/>
<path d="M1097 490.5h4v6h-4z M1095.5 496.5h7 M1099 496.5v4.500" fill="none" stroke="#fff" stroke-width="1.100"/><path d="M1100 490.5v6" stroke="#fff" stroke-width="1.600"/>
<path d="M1113 491.5l8 8 M1121 491.5l-8 8" stroke="#fff" stroke-width="1.500"/>
<path d="M318.500 88.500v6 M318.500 91.500h-4 M318.500 89.500h4.500v4h-4.500" fill="none" stroke="#75633d" stroke-width="1.100"/><path d="M318.500 93h4.500" stroke="#75633d" stroke-width="1.800"/>
<path d="M331.500 87.500l8 8 M339.500 87.500l-8 8" stroke="#75633d" stroke-width="1.400"/>
<path d="M1119.0 90.75h8l-4.0 4.5z" fill="#dfe5f2"/>
<path d="M677.0 112.75h6l-3.0 3.5z" fill="#1b1f2a"/>
<path d="M1120.0 112.75h6l-3.0 3.5z" fill="#1b1f2a"/>
<path d="M250 110.800l5-4.800l3.300 3.200l-5 4.800z M262 109.200l2.500 2.500l-2.500 2.500l-2.500-2.500z M261.500 115l2.500 2.500l-2.500 2.500l-2.500-2.500z" fill="#d2692e"/><path d="M255.500 111.300h5 M257.200 111v5.800h3" fill="none" stroke="#d2692e" stroke-width="1.200"/>
<path d="M694 108l4-2.500l4 2.500v4.500l-4 2.500l-4-2.500z M694 108l4 2.500l4-2.500 M698 110.500v5" fill="none" stroke="#7a3e9d" stroke-width="1"/><rect x="701" y="114" width="5" height="4" rx=".6" fill="#222"/><path d="M702.300 114v-1.200a1.200 1.200 0 0 1 2.400 0v1.200" fill="none" stroke="#222" stroke-width=".9"/>
<path d="M1116 131.500h11 M1116 134.500h11" stroke="#1e1e1e" stroke-width="1.100"/><path d="M1121.500 127v4 M1121.500 135v4 M1119.500 129l2-2.300l2 2.300z M1119.500 137l2 2.300l2-2.300z" stroke="#1e1e1e" stroke-width="1" fill="#1e1e1e"/>
<path d="M1117.0 153.0h9l-4.500-5z" fill="#868999"/>
<path d="M1117.0 447.5h9l-4.500 5z" fill="#868999"/>
<path d="M316.5 463.0v9l-5-4.500z" fill="#868999"/>
<path d="M1102.0 463.0v9l5-4.500z" fill="#868999"/>
<path d="M1117.0 544.5h9l-4.500-5z" fill="#868999"/>
<path d="M1117.0 645.5h9l-4.500 5z" fill="#868999"/>
<path d="M257.0 661.0v9l-5-4.500z" fill="#868999"/>
<path d="M1102.0 661.0v9l5-4.500z" fill="#868999"/>
<path d="M1149.0 640.0v9l-5-4.500z" fill="#868999"/>
<path d="M1330.0 640.0v9l5-4.500z" fill="#868999"/>
<path d="M295.0 466.25h6l-3.0 3.5z" fill="#1b1f2a"/>
<rect x="274.500" y="190.0" width="8" height="8" fill="#fff" stroke="#a5a5a5" stroke-width="1"/><path d="M276.500 194.0h4" stroke="#555" stroke-width="1"/>
<rect x="274.500" y="286.0" width="8" height="8" fill="#fff" stroke="#a5a5a5" stroke-width="1"/><path d="M276.500 290.0h4" stroke="#555" stroke-width="1"/>
<rect x="274.500" y="366.0" width="8" height="8" fill="#fff" stroke="#a5a5a5" stroke-width="1"/><path d="M276.500 370.0h4" stroke="#555" stroke-width="1"/>
<path d="M278.500 170.5h4" stroke="#a5a5a5" stroke-width="1"/>
<path d="M278.500 266.5h4" stroke="#a5a5a5" stroke-width="1"/>
<path d="M278.500 346.5h4" stroke="#a5a5a5" stroke-width="1"/>
<path d="M278.500 442.5h4" stroke="#a5a5a5" stroke-width="1"/>
<path d="M642.0 518.75h6l-3.0 3.5z" fill="#1b1f2a"/>
<rect x="660.0" y="512" width="1" height="16" fill="#8591a8"/>
<rect x="689.0" y="512" width="1" height="16" fill="#8591a8"/>
<rect x="741.0" y="512" width="1" height="16" fill="#8591a8"/>
<rect x="771.0" y="512" width="1" height="16" fill="#8591a8"/>
<path d="M669 525.500h12 M669 522.500h9" stroke="#b3b8c4" stroke-width="1.200"/><path d="M680 519.500h-6 M677 516.500l-3 3l3 3" fill="none" stroke="#b3b8c4" stroke-width="1.300"/><path d="M674 519v-4h4" fill="none" stroke="#b3b8c4" stroke-width="1.100"/>
<path d="M699 525.500h12 M699 522.500h12" stroke="#b3b8c4" stroke-width="1.200"/><path d="M710 518.500h-9 M704 515.500l-3 3l3 3" fill="none" stroke="#b3b8c4" stroke-width="1.300"/>
<path d="M721 525.500h12 M721 522.500h12" stroke="#b3b8c4" stroke-width="1.200"/><path d="M722 518.500h9 M728 515.500l3 3l-3 3" fill="none" stroke="#b3b8c4" stroke-width="1.300"/>
<path d="M751 520.500h13 M751 523.500h13 M751 526.500h13 M758 516.500h6" stroke="#2b2b2b" stroke-width="1.300"/><path d="M751 513.500l5 5 M756 513.500l-5 5" stroke="#c2410c" stroke-width="1.500"/>
<path d="M786 519h6.500v5h-6 M789 521.500l-2.500 2.500l2.500 2.500" fill="none" stroke="#2b2b2b" stroke-width="1.500"/><path d="M780 514h3v3h-3z M780 519.500h2.500 M780 521.500v3h3" fill="none" stroke="#2b2b2b" stroke-width=".9"/>
<circle cx="1153" cy="118" r="6" fill="#b3b8c4"/>
<path d="M1156.5 118H1150 M1152.5 115L1149.5 118L1152.5 121" stroke="#d6dbe9" stroke-width="1.8" fill="none"/>
<circle cx="1175" cy="118" r="6" fill="#b3b8c4"/>
<path d="M1171.5 118H1178 M1175.5 115L1178.5 118L1175.5 121" stroke="#d6dbe9" stroke-width="1.8" fill="none"/>
<path d="M1190 118.500l7-7l7 7 M1192.500 117v7.500h9v-7.500" fill="none" stroke="#2b2b2b" stroke-width="1.500"/><rect x="1195.500" y="120" width="3" height="4.500" fill="#2b2b2b"/><rect x="1200.500" y="111.500" width="1.800" height="3.500" fill="#2b2b2b"/>
<rect x="1211.0" y="108" width="1" height="20" fill="#8591a8"/>
<circle cx="1229.500" cy="119.500" r="4.700" fill="none" stroke="#2b2b2b" stroke-width="1.600"/><path d="M1229.500 117v3h2.500" fill="none" stroke="#2b2b2b" stroke-width="1.100"/><path d="M1222 112h4l-2 2.500z" fill="#2b2b2b"/><path d="M1224 113.500l2.500 2.500" stroke="#2b2b2b" stroke-width="1.200"/>
<path d="M1242.5 117.5h5l-2.5 3.0z" fill="#1b1f2a"/>
<path d="M1257 116.500h10 M1263.500 113.500l3.500 3l-3.500 3 M1267 121.500h-10 M1260.500 118.500l-3.500 3l3.500 3" fill="none" stroke="#2b2b2b" stroke-width="1.500"/>
<path d="M1279 121a5 5 0 0 1 7-6.500 M1289 116a5 5 0 0 1-7 6.500" fill="none" stroke="#2b2b2b" stroke-width="2"/><path d="M1283.500 112l4.500 1.500l-3.500 3z M1284.500 125.500l-4.500-1.500l3.500-3z" fill="#2b2b2b"/>
<path d="M1303 114.500v-2h10v8h-2 M1301.500 116.500v-2h10v8h-2" fill="none" stroke="#2b2b2b" stroke-width="1.100"/><rect x="1300" y="117" width="9.500" height="7.500" fill="#d6dbe9" stroke="#2b2b2b" stroke-width="1.500"/><path d="M1302.500 121h4.500" stroke="#0b4a9c" stroke-width="1.500"/>
<path d="M1333.500 108l2 2l-2 2z M1337.500 108l2 2l-2 2z" fill="#1b1f2a"/>
<circle cx="1322" cy="141.500" r="3.300" fill="none" stroke="#555" stroke-width="1.500"/><path d="M1319.600 144l-5 5" stroke="#555" stroke-width="2"/>
<path d="M1331.5 143.0h5l-2.5 3.0z" fill="#555"/>
<path d="M1151.500 169v-5h13v10.500h-4" fill="none" stroke="#2b2b2b" stroke-width="1.100"/><path d="M1151 164.500h14" stroke="#2b2b2b" stroke-width="1.800"/>
<path d="M1157.34 169.30L1160.00 170.31L1160.00 176.09L1157.34 177.10L1153.16 174.14L1151.45 175.23L1150.50 174.76L1150.50 171.64L1151.45 171.17L1153.16 172.26ZM1157.34 171.64L1157.34 174.76L1154.78 173.20Z M1151.36 172.42L1151.36 173.98L1152.40 173.20Z" fill="#ccd0dd" stroke="#ccd0dd" stroke-width="2" stroke-linejoin="round"/>
<path d="M1157.34 169.30L1160.00 170.31L1160.00 176.09L1157.34 177.10L1153.16 174.14L1151.45 175.23L1150.50 174.76L1150.50 171.64L1151.45 171.17L1153.16 172.26ZM1157.34 171.64L1157.34 174.76L1154.78 173.20Z M1151.36 172.42L1151.36 173.98L1152.40 173.20Z" fill="#2b2b2b" fill-rule="evenodd"/>
<path d="M1156.500 184.500v7h-7z" fill="#1e1e1e"/>
<rect x="1169.500" y="181.500" width="13" height="13" fill="#fff" stroke="#388a34" stroke-width="1"/><text x="1176" y="191.500" font-family="Liberation Sans" font-size="8" font-weight="700" text-anchor="middle" fill="#1e1e1e">C#</text>
<path d="M1168.500 203v8l4.500-4z" fill="#fff" stroke="#1e1e1e" stroke-width="1"/>
<path d="M1168.500 222v8l4.500-4z" fill="#fff" stroke="#1e1e1e" stroke-width="1"/>
<path d="M1168.500 241v8l4.500-4z" fill="#fff" stroke="#1e1e1e" stroke-width="1"/>
<path d="M1168.500 260v8l4.500-4z" fill="#fff" stroke="#1e1e1e" stroke-width="1"/>
<path d="M1168.500 279v8l4.500-4z" fill="#fff" stroke="#1e1e1e" stroke-width="1"/>
<path d="M1168.500 298v8l4.500-4z" fill="#fff" stroke="#1e1e1e" stroke-width="1"/>
<path d="M1190.300 210.800l4.200-4.200" stroke="#2b2b2b" stroke-width="3.200" stroke-linecap="round"/><circle cx="1195.800" cy="205" r="3.900" fill="#2b2b2b"/><path d="M1196.200 204.600l1.200-5l4 4z" fill="#fff"/><path d="M1196 204.800l2.300-2.300" stroke="#fff" stroke-width="2.200"/>
<rect x="1187" y="224" width="4" height="4" fill="#2b2b2b"/><rect x="1194" y="223" width="6" height="6" fill="#2b2b2b"/><path d="M1191 226h3" stroke="#2b2b2b" stroke-width="1"/>
<rect x="1187.500" y="238.5" width="13" height="12" fill="#fff" stroke="#2b2b2b" stroke-width="1"/><path d="M1187 239.5h14" stroke="#2b2b2b" stroke-width="2"/><path d="M1190 243.5h2.500 M1190 247.5h2.500" stroke="#2b2b2b" stroke-width="1"/><rect x="1194.500" y="242.5" width="4" height="2" fill="none" stroke="#2b2b2b" stroke-width=".9"/><rect x="1194.500" y="246.5" width="4" height="2" fill="none" stroke="#2b2b2b" stroke-width=".9"/>
<rect x="1187.500" y="257.5" width="13" height="12" fill="#fff" stroke="#2b2b2b" stroke-width="1"/><path d="M1187 258.5h14" stroke="#2b2b2b" stroke-width="2"/><path d="M1190 262.5h2.500 M1190 266.5h2.500" stroke="#2b2b2b" stroke-width="1"/><rect x="1194.500" y="261.5" width="4" height="2" fill="none" stroke="#2b2b2b" stroke-width=".9"/><rect x="1194.500" y="265.5" width="4" height="2" fill="none" stroke="#2b2b2b" stroke-width=".9"/>
<rect x="1187.500" y="276.5" width="13" height="12" fill="#fff" stroke="#2b2b2b" stroke-width="1"/><path d="M1187 277.5h14" stroke="#2b2b2b" stroke-width="2"/><path d="M1190 281.5h2.500 M1190 285.5h2.500" stroke="#2b2b2b" stroke-width="1"/><rect x="1194.500" y="280.5" width="4" height="2" fill="none" stroke="#2b2b2b" stroke-width=".9"/><rect x="1194.500" y="284.5" width="4" height="2" fill="none" stroke="#2b2b2b" stroke-width=".9"/>
<text x="1194.500" y="306" font-family="Liberation Sans" font-size="9.500" font-weight="700" text-anchor="middle" fill="#388a34">C#</text>
<defs>
<linearGradient id="pill" x1="0" y1="0" x2="0" y2="1"><stop offset="0" stop-color="#f4f4f4"/><stop offset=".5" stop-color="#e9e9e9"/><stop offset="1" stop-color="#d9d9d9"/></linearGradient>
<linearGradient id="ring" x1="0" y1="0" x2="0" y2="1"><stop offset="0" stop-color="#f7f7f7"/><stop offset="1" stop-color="#cfcfcf"/></linearGradient>
<clipPath id="gc"><circle cx="1260.500" cy="619.500" r="20.500"/></clipPath>
<radialGradient id="orb" cx=".4" cy=".35" r=".8"><stop offset="0" stop-color="#4aa3ea"/><stop offset=".6" stop-color="#1463b4"/><stop offset="1" stop-color="#0b2f6e"/></radialGradient>
<linearGradient id="glass" x1="0" y1="0" x2="0" y2="1"><stop offset="0" stop-color="#fff" stop-opacity=".7"/><stop offset="1" stop-color="#fff" stop-opacity=".1"/></linearGradient>
</defs>
<rect x="1250" y="602" width="113" height="38" rx="19" fill="url(#pill)" stroke="#c9c9c9" stroke-width="1"/>
<circle cx="1260.500" cy="619.500" r="23.700" fill="url(#ring)" stroke="#bdbdbd" stroke-width="1"/>
<g clip-path="url(#gc)"><rect x="1238" y="597" width="46" height="46" fill="#4cc45a"/><rect x="1238" y="597" width="46" height="16" fill="#2f9446"/><rect x="1238" y="597" width="46" height="9" fill="#5b8f79"/><rect x="1238" y="612.500" width="46" height="1.500" fill="#3aa64f"/><ellipse cx="1261" cy="603.500" rx="6" ry="1.700" fill="#dfe9e6"/></g>
<circle cx="1260.500" cy="619.500" r="20.500" fill="none" stroke="#2e8a43" stroke-width="1"/>
<text x="1260.500" y="624" font-family="Liberation Sans" font-size="13.500" text-anchor="middle" fill="#fff" letter-spacing=".6">61%</text>
<path d="M1292 617.500v-7 M1289 613.500l3-3.200l3 3.200" fill="none" stroke="#d2672a" stroke-width="1.800"/>
<path d="M1292 624v7 M1289 628l3 3.200l3-3.200" fill="none" stroke="#2f9446" stroke-width="1.800"/>
<text x="1334" y="616.800" font-family="Liberation Sans" font-size="9.500" text-anchor="end" fill="#222">0.2K/s</text>
<text x="1334" y="631.800" font-family="Liberation Sans" font-size="9.500" text-anchor="end" fill="#222">2K/s</text>
<circle cx="1348" cy="621.500" r="8.200" fill="#3b95e0" stroke="#8fc2ee" stroke-width="1"/><path d="M1343.500 621.500h9 M1348 617v9" stroke="#fff" stroke-width="1.800"/>
<circle cx="1354" cy="614.500" r="3.300" fill="#d96f3a" stroke="#b5531f" stroke-width=".6"/>
<clipPath id="tbc"><rect x="8" y="706" width="1366" height="30"/></clipPath>
<g clip-path="url(#tbc)"><circle cx="35" cy="720" r="18.500" fill="url(#orb)" stroke="#c8d6ea" stroke-width="1.200"/><g transform="translate(35 720) scale(1.22) translate(-35 -720.500)"><path d="M27 712c3-1.500 5-1 7 .5l-1.500 6.500c-2-1.500-4-2-7-.5z" fill="#e8642a"/><path d="M36 713.500c2.500 1.500 5 1.500 8 0l-1.500 6.500c-3 1.500-5.500 1.500-8 0z" fill="#7cc142"/><path d="M25 720.500c3-1.500 5-1 7 .5l-1.500 6.500c-2-1.500-4-2-7-.5z" fill="#3c9be8"/><path d="M33.500 722c2.500 1.500 5 1.500 8 0l-1.500 6.500c-3 1.500-5.500 1.500-8 0z" fill="#f5b921"/></g><ellipse cx="35.500" cy="711" rx="14" ry="7" fill="url(#glass)" opacity=".5"/></g>
<circle cx="88.500" cy="721" r="7.500" fill="#e14c3a"/><path d="M88.500 721l-6.500-3.700a7.500 7.500 0 0 0 3.300 10.500z" fill="#35a853"/><path d="M88.500 721l-3.200 6.800a7.500 7.500 0 0 0 10.500-6.800z" fill="#f6c02e"/><circle cx="88.500" cy="721" r="3.400" fill="#fff"/><circle cx="88.500" cy="721" r="2.600" fill="#4a8af4"/>
<path d="M127.500 714h5l1.500 1.500h8v12h-14.500z" fill="#f3d57c" stroke="#d0a840" stroke-width=".8"/><rect x="129" y="717" width="12" height="3" fill="#fbeeb7"/><path d="M130.500 721.500h9v6.500h-2.500v-3h-4v3h-2.500z" fill="#3b8de0"/><path d="M128.500 715.500h4" stroke="#6cbf4b" stroke-width="1"/>
<rect x="170" y="713" width="16" height="16" rx="3" fill="#2f8ee6"/><path d="M174 724.500l1-3.500l5-4.500l3 3l-5 4.500z" fill="#fff"/>
<circle cx="227.500" cy="721" r="7.500" fill="#f0e9dc"/><path d="M227.500 721l0-7.500a7.500 7.500 0 0 1 6.500 3.800z" fill="#3a57e8"/><path d="M227.500 721l6.500-3.700a7.500 7.500 0 0 1-1.500 9z" fill="#c2662a"/><path d="M227.500 721l5 5.500a7.500 7.500 0 0 1-8 1.300z" fill="#f0c23a"/><path d="M227.500 721l-3 6.800a7.500 7.500 0 0 1-4.300-8z" fill="#48b04c"/><path d="M227.500 721l-7.300-1.200a7.500 7.500 0 0 1 7.300-6.300z" fill="#38b5a0"/><circle cx="227.500" cy="721" r="2.600" fill="#f6efe3"/>
<path d="M265 713.500l9-1.500v18l-9-1.500z" fill="#1172c4"/><text x="269.500" y="725.500" font-family="Liberation Sans" font-size="10" font-weight="700" text-anchor="middle" fill="#fff">L</text><path d="M275 716c4 0 5.500 2 5.500 4.500s-2 4.500-5.500 4.500" fill="none" stroke="#1172c4" stroke-width="1.800"/><path d="M275 719.500h3.500l-1.500 2.500" fill="none" stroke="#1172c4" stroke-width="1.200"/>
<rect x="311.500" y="713.500" width="15" height="15" fill="#2f84d6" stroke="#1d4f8c" stroke-width="1"/>
<ellipse cx="363" cy="719.5" rx="5.5" ry="4.7" fill="#5fbe3b"/><path d="M360 723l-1.500 3l3.5 -1.500z" fill="#5fbe3b"/><ellipse cx="368" cy="723.5" rx="4.5" ry="3.8" fill="#f4f4f4" stroke="#cfd6cf" stroke-width=".5"/>
<path d="M414.74 712.50L419.50 714.71L419.50 727.29L414.74 729.50L407.26 723.04L404.20 725.42L402.50 724.40L402.50 717.60L404.20 716.58L407.26 718.96ZM414.74 717.60L414.74 724.40L410.15 721.00Z M404.03 719.30L404.03 722.70L405.90 721.00Z" fill="#f4f0f8" stroke="#f4f0f8" stroke-width="1.4" stroke-linejoin="round"/>
<path d="M414.74 712.50L419.50 714.71L419.50 727.29L414.74 729.50L407.26 723.04L404.20 725.42L402.50 724.40L402.50 717.60L404.20 716.58L407.26 718.96ZM414.74 717.60L414.74 724.40L410.15 721.00Z M404.03 719.30L404.03 722.70L405.90 721.00Z" fill="#68217a" fill-rule="evenodd"/>
<rect x="449.500" y="713.500" width="16" height="10.500" fill="#fff" stroke="#444" stroke-width="1.400"/><path d="M454 728.500h7 M457.500 724.500v4" stroke="#444" stroke-width="1.500"/><path d="M455 717v1 M460 717v1" stroke="#444" stroke-width="1"/><path d="M455 720c1.500 1.500 3.500 1.500 5 0" fill="none" stroke="#444" stroke-width=".8"/>
<rect x="919" y="716.500" width="14" height="8.500" rx="1" fill="#cfd6df" stroke="#8a94a3" stroke-width=".8"/><path d="M921 719h10 M921 721h10 M923 723h6" stroke="#7d8796" stroke-width=".8" stroke-dasharray="1.200 .8"/><path d="M926 716.500c0-2 3-1.500 4-3" fill="none" stroke="#cfd6df" stroke-width=".8"/>
<circle cx="947.500" cy="719" r="7" fill="#2446c9" stroke="#dfe6f2" stroke-width="1.200"/><text x="947.500" y="723" font-family="Liberation Sans" font-size="10.500" font-weight="700" text-anchor="middle" fill="#fff">?</text>
<path d="M967 711.500h5v3h-5z M969 713.500h-2.500v3h5v-2" fill="none" stroke="#fff" stroke-width=".9"/><path d="M967 723h5l-2.500 2.500z" fill="#fff"/>
<path d="M990 716.500a12.500 12.500 0 0 1 18 0 M992.500 719.500a9 9 0 0 1 13 0 M995 722.500a5.500 5.500 0 0 1 8 0" fill="none" stroke="#fff" stroke-width="1.700"/><circle cx="999" cy="726" r="1.800" fill="#fff"/>
<path d="M1020 723.500h8l-4-4.500z" fill="#fff"/>
<rect x="1041.500" y="715.500" width="15" height="9.500" fill="#f3f3f3" stroke="#555" stroke-width="1"/><path d="M1046 728.500h6 M1049 725v3.500" stroke="#555" stroke-width="1.300"/><path d="M1047 721.500h3" stroke="#555" stroke-width=".8"/>
<ellipse cx="1071.1" cy="719.575" rx="5.225" ry="4.465" fill="#5fbe3b"/><path d="M1068.25 722.9l-1.500 2.8499999999999996l3.3249999999999997 -1.500z" fill="#5fbe3b"/><ellipse cx="1075.85" cy="723.375" rx="4.2749999999999995" ry="3.61" fill="#f4f4f4" stroke="#cfd6cf" stroke-width=".5"/>
<ellipse cx="1096.500" cy="723" rx="6" ry="6.500" fill="#1a1a1a"/><ellipse cx="1096.500" cy="716" rx="4.300" ry="4" fill="#1a1a1a"/><ellipse cx="1096.500" cy="725" rx="3.600" ry="4" fill="#fff"/><ellipse cx="1095" cy="715.500" rx="1" ry="1.400" fill="#fff"/><ellipse cx="1098" cy="715.500" rx="1" ry="1.400" fill="#fff"/><ellipse cx="1096.500" cy="718.500" rx="2.300" ry="1" fill="#f0a020"/><path d="M1091 720.500c3 2 8 2 11 0l.5 2c-4 2-8 2-12 0z" fill="#d8302a"/><circle cx="1101.500" cy="726" r="3.800" fill="#e2572b"/><path d="M1099.500 726h4" stroke="#fff" stroke-width="1.300"/>
<path d="M1114.500 722a6.500 6.500 0 0 1 10-6 M1127 720a6.500 6.500 0 0 1-10 6" fill="none" stroke="#38b54a" stroke-width="3"/><path d="M1122.500 712.500l5 3.500l-5.500 2.500z M1119 729.500l-5-3.500l5.500-2.500z" fill="#38b54a"/>
<ellipse cx="1147" cy="716" rx="5" ry="4" fill="#8cc6ee"/><ellipse cx="1143.500" cy="720" rx="6" ry="4.500" fill="#f6a83a"/><ellipse cx="1149" cy="723.500" rx="6.500" ry="5.500" fill="#f59a23" stroke="#fbd08e" stroke-width=".8"/><path d="M1145.500 721.500h7 M1145.500 723.500h7 M1145.500 725.500h7" stroke="#fde3b5" stroke-width="1"/>
<circle cx="1168.500" cy="721" r="8" fill="url(#orb)"/><path d="M1166 714c6 2 7 10 1 15c9-2 9-13-1-15z" fill="#fff" opacity=".95"/>
<rect x="1185" y="713" width="16" height="16" rx="2.500" fill="#2f8ee6"/><path d="M1189 724.500l1-3.500l5-4.500l3 3l-5 4.500z" fill="#fff"/>
<rect x="1209" y="713" width="16" height="16" fill="#3c4fd8"/><rect x="1209" y="725" width="16" height="4" fill="#e8a45a"/><circle cx="1217" cy="720" r="3.400" fill="#b9b3c9"/><path d="M1217 715v10 M1212 720h10 M1213.500 716.500l7 7 M1220.500 716.500l-7 7" stroke="#b9b3c9" stroke-width="1.300"/><circle cx="1217" cy="720" r="1.300" fill="#3c4fd8"/>
<rect x="1233.500" y="713.500" width="9" height="14" rx="1.500" fill="#e9edf2" stroke="#fff" stroke-width="1.200"/><path d="M1238 713v-1.500h4" fill="none" stroke="#fff" stroke-width="1"/><path d="M1239 717v8h4c3 0 3-1.500 3-4s0-4-3-4z" fill="#fff" stroke="#5a6473" stroke-width=".9"/><path d="M1246 719h3 M1246 723h3" stroke="#fff" stroke-width="1.300"/><rect x="1235.500" y="716" width="2.500" height="9" fill="#9aa5b4"/>
<path d="M1257.500 727v-2 M1260.500 727v-4 M1263.500 727v-6.500 M1266.500 727v-9.500 M1269.500 727v-12.500" stroke="#fff" stroke-width="2"/>
<path d="M1281.500 718.500h3l4-4v13l-4-4h-3z" fill="#eef2f7" stroke="#fff" stroke-width=".8"/><path d="M1291 718.500c1.200 1.500 1.200 3.500 0 5 M1293.500 716.500c2.200 2.700 2.200 6.300 0 9 M1296 714.500c3.200 4 3.200 9 0 13" fill="none" stroke="#fff" stroke-width="1.100"/>
<path d="M448.500 77.300v16.300l3.400-3.100l2.900 5.800l2.100-1l-2.800-5.700h5.200z" fill="#fff" stroke="#000" stroke-width="1" stroke-linejoin="miter"/>
</svg>
</div></body></html>
